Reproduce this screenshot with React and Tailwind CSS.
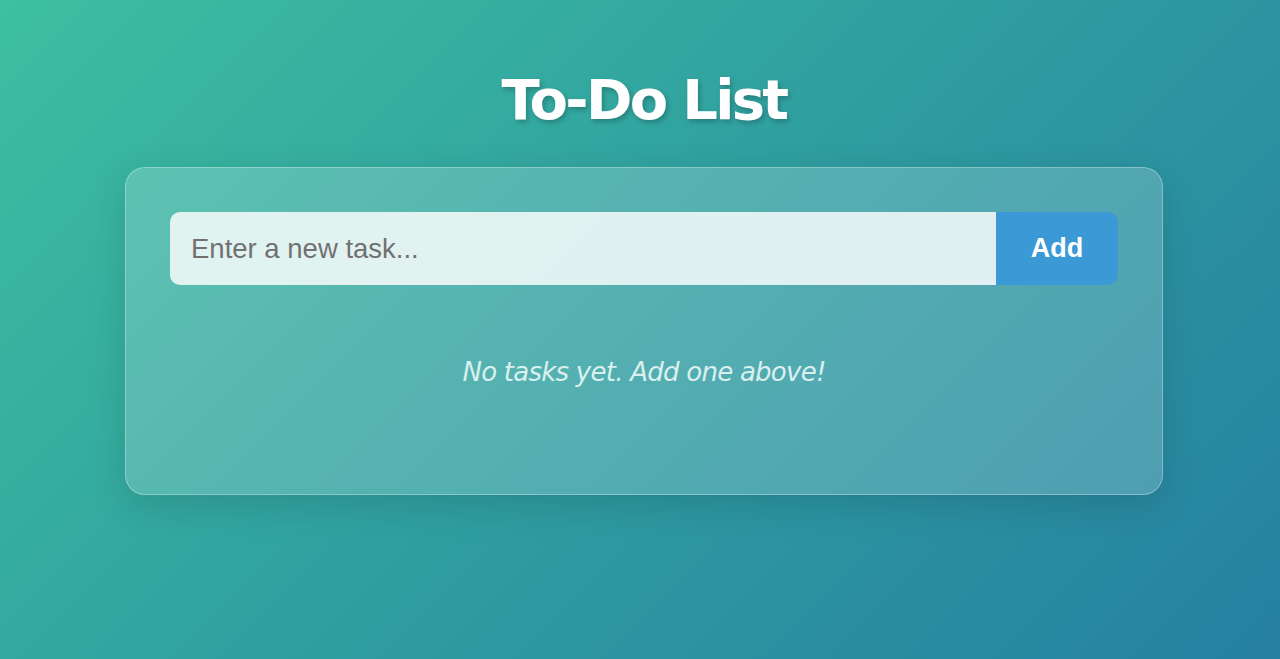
import React, { useState } from "react";

export default function App() {
  const [task, setTask] = useState("");
  const [tasks, setTasks] = useState([]);

  const addTask = () => {
    if (!task.trim()) return;
    setTasks([...tasks, { id: Date.now(), text: task.trim(), done: false }]);
    setTask("");
  };

  return (
    <div className="min-h-screen w-full bg-[linear-gradient(135deg,#3dbfa0_0%,#2f9ea0_50%,#2680a1_100%)] pt-[66px] pl-[8px]">
      {/* title */}
      <h1 className="text-center text-white font-bold text-[56px] leading-[67px] mb-[34px] font-['DejaVu_Sans',sans-serif] tracking-[-2.7px] [text-shadow:2px_3px_5px_rgba(0,0,0,0.22)]">
        To-Do List
      </h1>

      {/* card */}
      <div className="mx-auto w-[1038px] rounded-[20px] border border-white/30 bg-white/[0.18] p-[44px] shadow-[0_10px_36px_rgba(0,0,0,0.13)]">
        <div className="flex h-[73px]">
          <input
            type="text"
            value={task}
            onChange={(e) => setTask(e.target.value)}
            onKeyDown={(e) => e.key === "Enter" && addTask()}
            placeholder="Enter a new task..."
            className="flex-1 rounded-l-[10px] bg-white/[0.82] px-[21px] text-[27.5px] text-[#333] placeholder:text-[#717171] outline-none font-['Liberation_Sans',Arial,sans-serif]"
          />
          <button
            onClick={addTask}
            className="w-[122px] rounded-r-[10px] bg-[#3b9ad5] text-white font-bold text-[27px] font-['Liberation_Sans',Arial,sans-serif]"
          >
            Add
          </button>
        </div>

        {tasks.length === 0 ? (
          <p className="mt-[71px] mb-[62px] text-center italic text-[26px] leading-[32px] text-[#d9f0ef] font-['DejaVu_Sans',sans-serif] tracking-[-0.75px]">
            No tasks yet. Add one above!
          </p>
        ) : (
          <ul className="mt-[30px] space-y-3">
            {tasks.map((t) => (
              <li key={t.id} className="rounded-[10px] bg-white/80 px-5 py-4 text-[20px] text-[#333] font-['Liberation_Sans',Arial,sans-serif]">
                {t.text}
              </li>
            ))}
          </ul>
        )}
      </div>
    </div>
  );
}
